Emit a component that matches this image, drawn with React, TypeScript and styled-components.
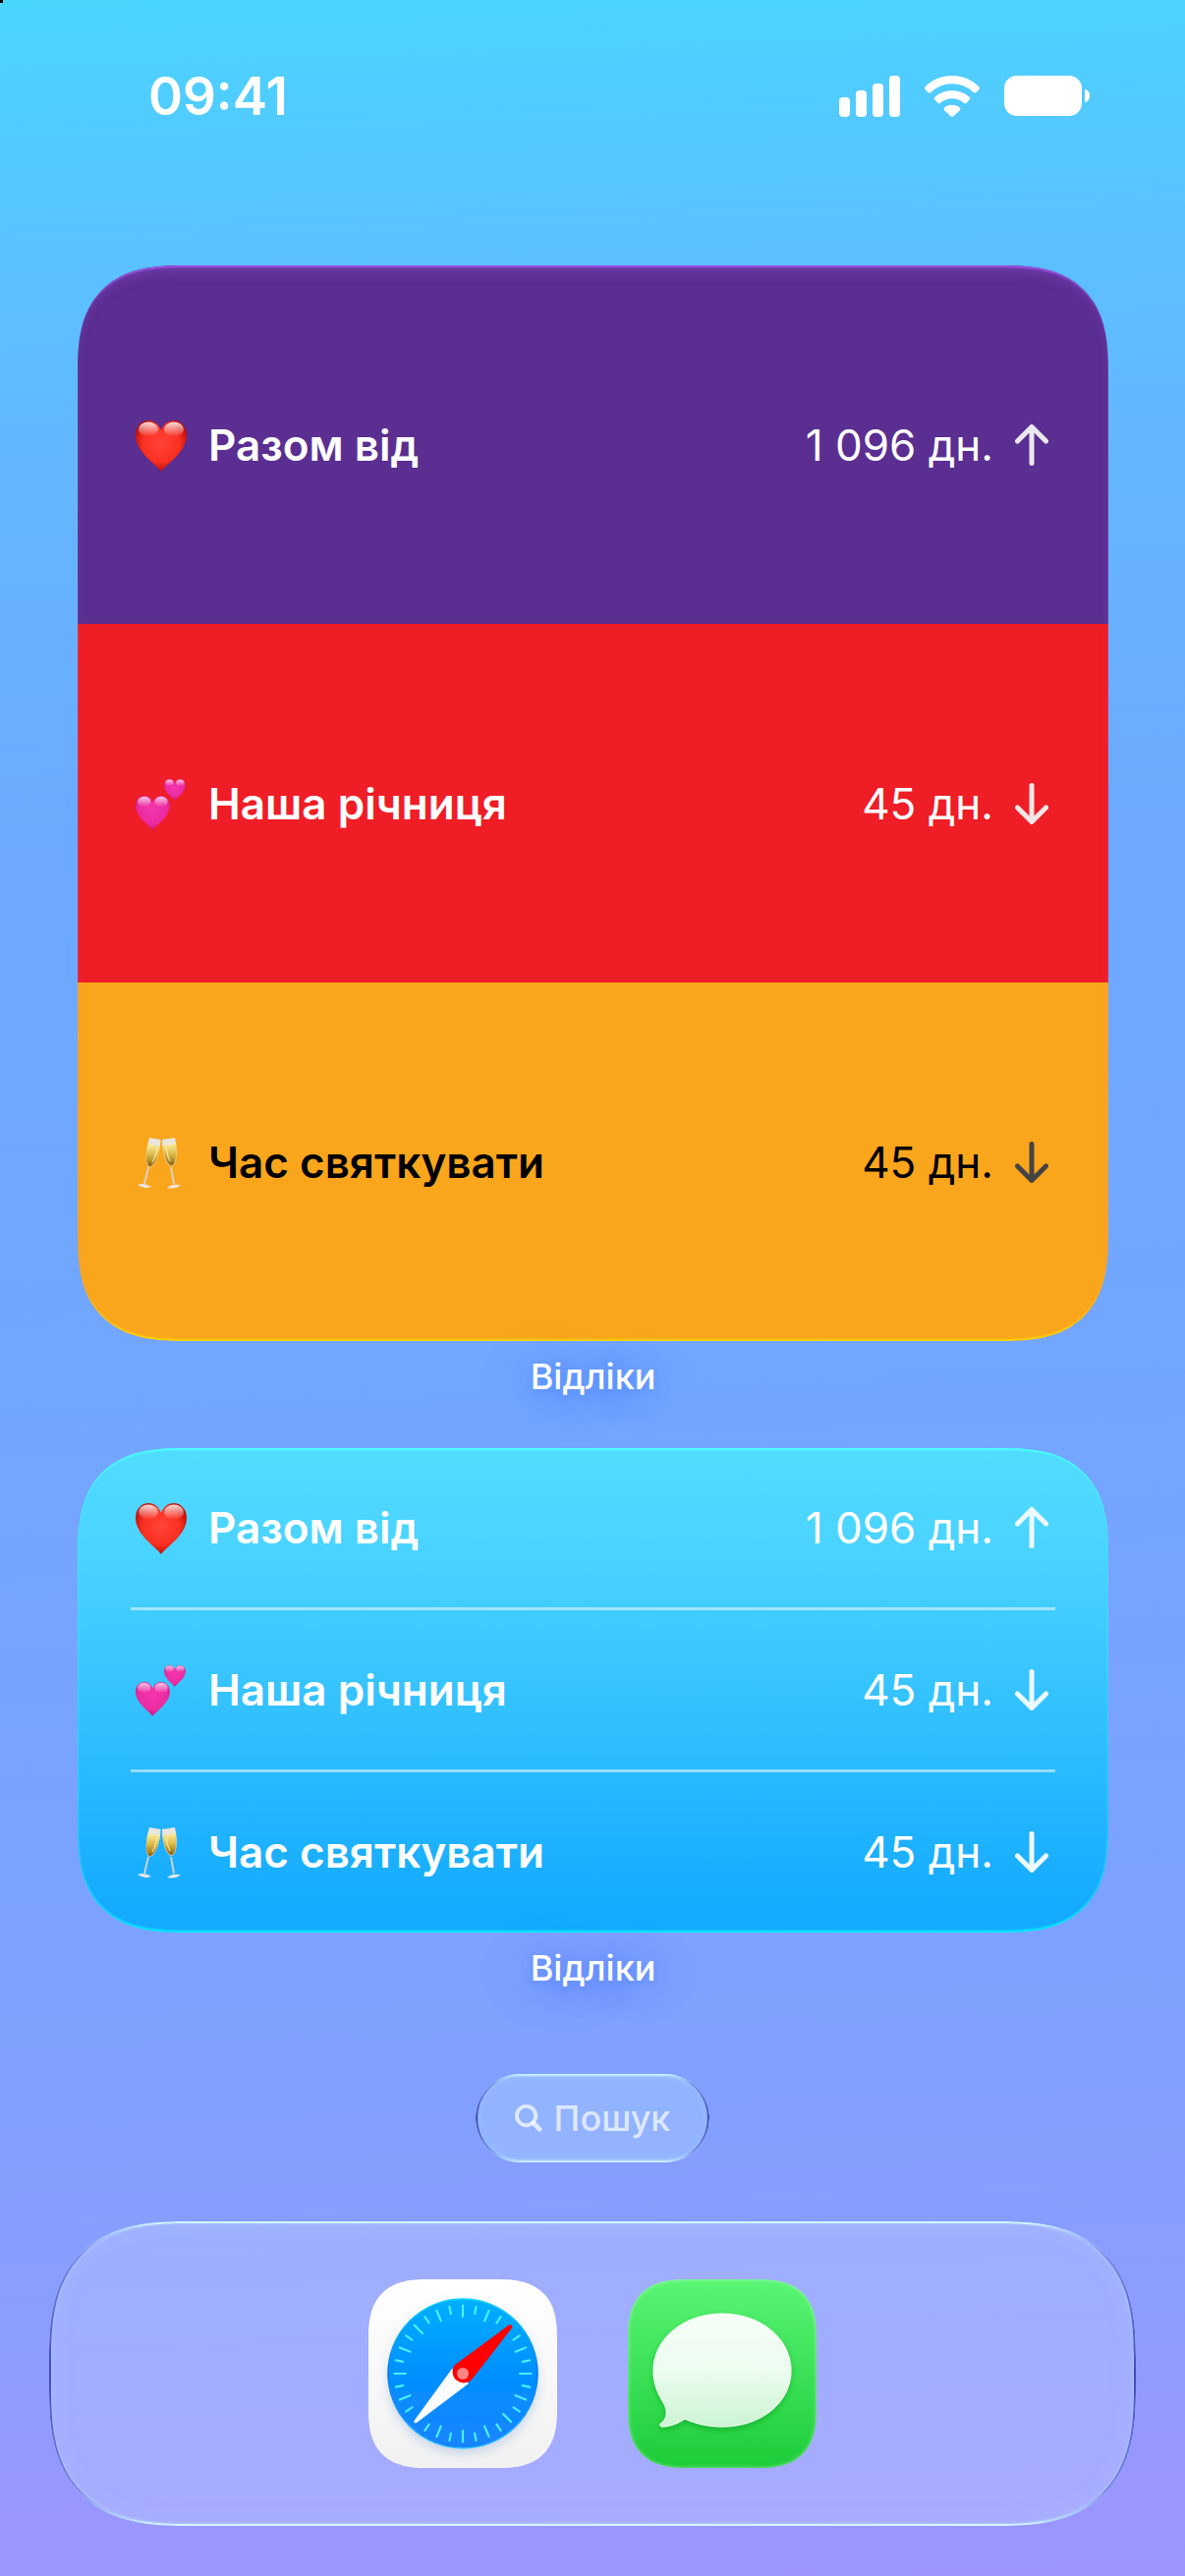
import styled, { createGlobalStyle, css } from "styled-components";

const GlobalStyle = createGlobalStyle`
  * {
    box-sizing: border-box;
  }
  body {
    margin: 0;
    font-family: Inter, "Noto Sans", sans-serif;
    -webkit-font-smoothing: antialiased;
  }
`;

const HomeScreen = styled.div`
  min-height: 100vh;
  display: flex;
  flex-direction: column;
  align-items: stretch;
  color: white;
  background: linear-gradient(black, black) 0 0 / 3px 3px no-repeat,
    linear-gradient(
      178deg,
      #48d6fc 0%,
      #50cdff 4%,
      #5ac2ff 10%,
      #64b6ff 18%,
      #6caaff 32%,
      #72a6ff 52%,
      #78a3ff 66%,
      #80a0ff 80%,
      #8a9dff 88%,
      #9a96ff 97%,
      #9b95fd 100%
    );
`;

const StatusBar = styled.header`
  display: flex;
  align-items: center;
  justify-content: space-between;
  height: 196px;
  padding: 0 96px 0 151px;
`;
const Time = styled.time`
  font-size: 53px;
  line-height: 60px;
  font-weight: 600;
`;
const StatusIcons = styled.div`
  display: flex;
  align-items: center;
  gap: 24px;
`;

const Widgets = styled.main`
  padding: 74px 78px 0 79px;
`;
const Widget = styled.section`
  margin: 0;
`;
const smoothCorners = css<{ $radius: number }>`
  border-radius: ${(props) => props.$radius}px;
  @supports (corner-shape: squircle) {
    border-radius: ${(props) => Math.round(props.$radius * 1.32)}px;
    corner-shape: superellipse(1.4);
  }
`;

const StripeCard = styled.ul<{ $radius: number }>`
  position: relative;
  margin: 0;
  padding: 0;
  list-style: none;
  overflow: hidden;
  ${smoothCorners}

  &::after {
    content: "";
    position: absolute;
    inset: 0;
    border-radius: inherit;
    corner-shape: inherit;
    pointer-events: none;
    box-shadow: inset 0 3px 2px -1px rgba(178, 92, 255, 0.8),
      inset 0 10px 16px -8px rgba(178, 110, 255, 0.4),
      inset 0 -3px 2px -1px rgba(255, 224, 0, 0.9);
  }
`;
const GlassCard = styled.ul<{ $radius: number }>`
  margin: 0;
  padding: 0 54px 1px;
  list-style: none;
  background: linear-gradient(#52dcff, #46d0ff 28%, #2ebdff 60%, #14aaff 95%);
  box-shadow: inset 0 3px 2px -1px #4bffff, inset 0 -3px 2px -1px #00f0ff,
    inset 0 0 3px rgba(75, 255, 255, 0.7);
  ${smoothCorners}
`;

const Row = styled.li`
  display: flex;
  align-items: center;
`;
const StripeRow = styled(Row)<{ $bgcolor: string; $textcolor: string }>`
  height: 365px;
  padding: 0 54px;
  background: ${(props) => props.$bgcolor};
  color: ${(props) => props.$textcolor};
`;
const GlassRow = styled(Row)`
  height: 162px;

  & + & {
    height: 165px;
    border-top: 3px solid rgba(255, 255, 255, 0.5);
  }
`;
const Emoji = styled.svg`
  width: 52px;
  height: 52px;
  margin: 2px 22px 0 5px;
  flex: none;
`;
const Title = styled.span`
  flex: 1;
  font-size: 44px;
  line-height: 56px;
  font-weight: 600;
`;
const Days = styled.span`
  font-size: 44px;
  line-height: 56px;
`;
const Arrow = styled.svg<{ $down: boolean; $color: string }>`
  width: 34px;
  height: 42px;
  margin: 0 7px 0 22px;
  color: ${(props) => props.$color};
  transform: ${(props) => (props.$down ? "rotate(180deg)" : "none")};
`;

const WidgetLabel = styled.h2`
  position: relative;
  margin: 0;
  padding: 12px 0 49px;
  text-align: center;
  font-size: 36px;
  line-height: 48px;
  font-weight: 500;
  text-shadow: 0 3px 6px rgba(60, 120, 255, 0.25), 0 6px 30px rgba(50, 120, 255, 0.4),
    0 4px 70px rgba(50, 120, 255, 0.25);
`;

/* one thin ring: bright on the top and bottom edges, dark on the sides */
const glassRing = css`
  position: relative;

  &::before {
    content: "";
    position: absolute;
    inset: 0;
    padding: 2px;
    border-radius: inherit;
    corner-shape: inherit;
    pointer-events: none;
    background: linear-gradient(
      #d8fbff 0%,
      #b8dcff 2%,
      rgba(84, 100, 210, 0.6) 12%,
      rgba(52, 60, 180, 0.9) 50%,
      rgba(84, 100, 210, 0.6) 88%,
      #b8dcff 98%,
      #d8fbff 100%
    );
    mask: linear-gradient(black, black) content-box exclude, linear-gradient(black, black);
  }
`;
const SearchButton = styled.button`
  display: flex;
  align-items: center;
  align-self: center;
  gap: 12px;
  height: 90px;
  margin-top: 35px;
  padding: 0 40px;
  border: 0;
  border-radius: 45px;
  color: rgba(255, 255, 255, 0.7);
  background: rgba(160, 195, 255, 0.55);
  font-family: inherit;
  font-size: 36px;
  font-weight: 500;
  ${glassRing}
  box-shadow: inset 0 3px 2px rgba(190, 240, 255, 0.5),
    inset 0 -3px 2px rgba(190, 240, 255, 0.5),
    inset 0 0 14px rgba(160, 210, 255, 0.5);
`;
const Dock = styled.nav<{ $radius: number }>`
  display: flex;
  align-items: center;
  justify-content: center;
  gap: 72px;
  height: 310px;
  margin: 60px 50px 51px;
  background: rgba(180, 192, 255, 0.5);
  ${smoothCorners}
  ${glassRing}
  box-shadow: inset 0 0 2px 3px rgba(190, 215, 255, 0.4),
    inset 0 0 24px rgba(190, 210, 255, 0.3);
`;
const AppButton = styled.button<{ $radius: number; $bg: string }>`
  width: 192px;
  height: 192px;
  padding: 0;
  border: 0;
  background: ${(props) => props.$bg};
  ${smoothCorners}
  box-shadow: inset 0 0 4px rgba(255, 255, 255, 0.5);

  & > svg {
    display: block;
  }
`;

type EmojiName = "heart" | "hearts" | "glasses";

interface ICountdown {
  emoji: EmojiName;
  title: string;
  days: string;
  down: boolean;
  color: string;
  text: string;
  arrow: string;
}

const countdowns: ICountdown[] = [
  {
    emoji: "heart",
    title: "Разом від",
    days: "1 096 дн.",
    down: false,
    color: "#5b2e91",
    text: "white",
    arrow: "#ebe8f0",
  },
  {
    emoji: "hearts",
    title: "Наша річниця",
    days: "45 дн.",
    down: true,
    color: "#ef1d25",
    text: "white",
    arrow: "#f4e6e7",
  },
  {
    emoji: "glasses",
    title: "Час святкувати",
    days: "45 дн.",
    down: true,
    color: "#faa61c",
    text: "black",
    arrow: "#444444",
  },
];

const heartPath =
  "M26 52C20 44 0 32 0 15C0 6 6 0 13.500 0C19 0 24 4 26 10C28 4 33 0 38.500 0C46 0 52 6 52 15C52 32 32 44 26 52Z";

function EmojiIcon({ name, id }: { name: EmojiName; id: string }) {
  if (name === "heart") {
    return (
      <Emoji viewBox="0 0 52 52" aria-hidden="true">
        <defs>
          <radialGradient id={`${id}-r`} cx="0.5" cy="0.45" r="0.6">
            <stop offset="0" stopColor="#ff4438" />
            <stop offset="0.6" stopColor="#fa3022" />
            <stop offset="1" stopColor="#ac0400" />
          </radialGradient>
          <linearGradient id={`${id}-s`} x1="0" y1="0" x2="0" y2="1">
            <stop offset="0" stopColor="#fff" stopOpacity="0.85" />
            <stop offset="1" stopColor="#fff" stopOpacity="0" />
          </linearGradient>
        </defs>
        <path d={heartPath} fill={`url(#${id}-r)`} />
        <ellipse cx="13" cy="9" rx="10" ry="7.500" fill={`url(#${id}-s)`} />
        <ellipse cx="39" cy="9" rx="10" ry="7.500" fill={`url(#${id}-s)`} />
      </Emoji>
    );
  }
  if (name === "hearts") {
    return (
      <Emoji viewBox="0 0 52 52" aria-hidden="true">
        <defs>
          <radialGradient id={`${id}-p`} cx="0.5" cy="0.4" r="0.65">
            <stop offset="0" stopColor="#f534ae" />
            <stop offset="0.65" stopColor="#ea2ba0" />
            <stop offset="1" stopColor="#c01078" />
          </radialGradient>
          <linearGradient id={`${id}-s`} x1="0" y1="0" x2="0" y2="1">
            <stop offset="0" stopColor="#fff" stopOpacity="0.75" />
            <stop offset="1" stopColor="#fff" stopOpacity="0" />
          </linearGradient>
        </defs>
        <g transform="translate(0 17) scale(0.67)">
          <path d={heartPath} fill={`url(#${id}-p)`} />
          <ellipse cx="13" cy="9" rx="10" ry="8" fill={`url(#${id}-s)`} />
          <ellipse cx="39" cy="9" rx="10" ry="8" fill={`url(#${id}-s)`} />
        </g>
        <g transform="translate(29 0) scale(0.42)">
          <path d={heartPath} fill={`url(#${id}-p)`} />
          <ellipse cx="13" cy="9" rx="10" ry="8" fill={`url(#${id}-s)`} />
          <ellipse cx="39" cy="9" rx="10" ry="8" fill={`url(#${id}-s)`} />
        </g>
      </Emoji>
    );
  }
  return (
    <Emoji viewBox="0 0 52 52" aria-hidden="true">
      <defs>
        <linearGradient id={`${id}-w`} x1="0" y1="0" x2="0" y2="1">
          <stop offset="0" stopColor="#fdf0a0" />
          <stop offset="0.5" stopColor="#dcb845" />
          <stop offset="1" stopColor="#8a5f0c" />
        </linearGradient>
      </defs>
      <path d="M13 30L9 47" stroke="#d8d5cf" strokeWidth="1.800" />
      <path d="M36 30L39 47" stroke="#d8d5cf" strokeWidth="1.800" />
      <path d="M2 48Q8 45 16 50Q9 53 2 48Z" fill="#e9e6e0" />
      <path d="M32 51Q38 46 46 48.500Q40 53 32 51Z" fill="#e9e6e0" />
      <path d="M14 0L25.500 2C25 16 20 29 14.500 30C9 29 10 14 14 0Z" fill="#e9e6dc" />
      <path
        d="M12.500 6Q18 8 24.800 8.500C24 18 19 29 14.500 29.500C10 28 10.500 16 12.500 6Z"
        fill={`url(#${id}-w)`}
      />
      <path d="M27 2L40 0C43 14 42 28 36.500 29C31 29 27 15 27 2Z" fill="#e9e6dc" />
      <path
        d="M27.500 8Q34 8 41 5.500C42 16 41 28 36.500 28.500C32 28 28 17 27.500 8Z"
        fill={`url(#${id}-w)`}
      />
      <path
        d="M22 10C21 17 19 22 17 25M31 10C32 17 34 22 35 24"
        fill="none"
        stroke="#fff3b0"
        strokeWidth="1.500"
        opacity="0.7"
      />
    </Emoji>
  );
}

function RowContent({ item, id, arrow }: { item: ICountdown; id: string; arrow: string }) {
  return (
    <>
      <EmojiIcon name={item.emoji} id={id} />
      <Title>{item.title}</Title>
      <Days>{item.days}</Days>
      <Arrow $down={item.down} $color={arrow} viewBox="0 0 34 42" aria-hidden="true">
        <path
          d="M17 39.500V3M2.500 17L17 2.500L31.500 17"
          fill="none"
          stroke="currentColor"
          strokeWidth="5"
          strokeLinecap="round"
          strokeLinejoin="round"
        />
      </Arrow>
    </>
  );
}

function SafariIcon() {
  // the needle covers two of the 32 marks
  const ticks = Array.from({ length: 32 }, (_, i) => i).filter((i) => i !== 4 && i !== 20);
  return (
    <svg width="192" height="192" viewBox="0 0 192 192" aria-hidden="true">
      <defs>
        <linearGradient id="safari-face" x1="0" y1="0" x2="0" y2="1">
          <stop offset="0" stopColor="#00b0ff" />
          <stop offset="0.5" stopColor="#0090ff" />
          <stop offset="1" stopColor="#1a84ff" />
        </linearGradient>
        <linearGradient id="safari-rim" x1="0" y1="0" x2="0" y2="1">
          <stop offset="0" stopColor="#00d8ff" />
          <stop offset="0.5" stopColor="#0070e8" />
          <stop offset="1" stopColor="#30c8ff" />
        </linearGradient>
        <filter id="safari-shadow" x="-20%" y="-20%" width="140%" height="140%">
          <feDropShadow dx="0" dy="5" stdDeviation="5" floodColor="#2060c0" floodOpacity="0.2" />
        </filter>
      </defs>
      <circle
        cx="96"
        cy="96"
        r="76"
        fill="url(#safari-face)"
        stroke="url(#safari-rim)"
        strokeWidth="1.500"
        filter="url(#safari-shadow)"
      />
      {ticks.map((i) => (
        <line
          key={i}
          x1="96"
          x2="96"
          y1="26.500"
          y2={i % 2 === 0 ? 38 : 34}
          stroke="#48f0ff"
          strokeWidth="2.200"
          strokeLinecap="round"
          transform={`rotate(${i * 11.25} 96 96)`}
        />
      ))}
      <path d="M85 91L46.500 144Q45.500 147 49 146L102 106Z" fill="#fafcff" />
      <path d="M88 87L143 46.500Q147 45 146 49.500L106 101A11 11 0 1 1 88 87Z" fill="#ff0000" />
      <circle cx="96" cy="96" r="6" fill="#ff8585" />
    </svg>
  );
}

function MessagesIcon() {
  return (
    <svg width="192" height="192" viewBox="0 0 192 192" aria-hidden="true">
      <defs>
        <linearGradient id="bubble" x1="0" y1="0" x2="0" y2="1">
          <stop offset="0" stopColor="#f6fdf7" />
          <stop offset="0.5" stopColor="#ecfcef" />
          <stop offset="1" stopColor="#cdf4d3" />
        </linearGradient>
        <filter id="bubble-shadow" x="-20%" y="-20%" width="140%" height="140%">
          <feDropShadow dx="0" dy="3" stdDeviation="3" floodColor="#008a18" floodOpacity="0.4" />
        </filter>
      </defs>
      <path
        d="M96 35C135 35 166 60 166 93C166 126 135 150 96 150C82 150 69 147 58 142C51 147 42 150 34 150Q32 149 33 147C38 144 40 139 39 133C38 125 26 115 26 93C26 60 57 35 96 35Z"
        fill="url(#bubble)"
        stroke="#f8fff9"
        strokeWidth="1"
        filter="url(#bubble-shadow)"
      />
    </svg>
  );
}

function App() {
  return (
    <HomeScreen>
      <GlobalStyle />
      <StatusBar>
        <Time>09:41</Time>
        <StatusIcons>
          <svg width="62" height="42" viewBox="0 0 62 42" fill="white" aria-hidden="true">
            <rect x="0" y="22" width="11" height="20" rx="4" />
            <rect x="17" y="15" width="11" height="27" rx="4" />
            <rect x="34" y="8" width="11" height="34" rx="4" />
            <rect x="51" y="0" width="11" height="42" rx="4" />
          </svg>
          <svg width="58" height="42" viewBox="0 0 58 43" fill="white" aria-hidden="true">
            <path d="M29 0C40 0 50 4.500 57 11.500Q58.500 13 57 14.500L54 17.500Q52.500 18.500 51 17.300C45 11.500 37 8.500 29 8.500C21 8.500 13 11.500 7 17.300Q5.500 18.500 4 17.500L1 14.500Q-0.500 13 1 11.500C8 4.500 18 0 29 0Z" />
            <path d="M29 15.500C36 15.500 42.500 18 47 22.300Q48.500 23.800 47 25.200L44 28.300Q42.500 29.500 41 28.300C38 25.500 33.500 23.800 29 23.800C24.500 23.800 20 25.500 17 28.300Q15.500 29.500 14 28.300L11 25.200Q9.500 23.800 11 22.300C15.500 18 22 15.500 29 15.500Z" />
            <path d="M29 30.500C32 30.500 34.800 31.500 37 33.300Q38.300 34.500 37 36L30.300 42.500Q29 43.500 27.700 42.500L21 36Q19.700 34.500 21 33.300C23.200 31.500 26 30.500 29 30.500Z" />
          </svg>
          <svg width="88" height="42" viewBox="0 0 88 42" fill="white" aria-hidden="true">
            <rect x="0" y="0" width="79" height="41" rx="13" />
            <path d="M82 13.500C85 14.500 87 17 87 20.500C87 24 85 26.500 82 27.500Z" />
          </svg>
        </StatusIcons>
      </StatusBar>
      <Widgets>
        <Widget>
          <StripeCard $radius={82}>
            {countdowns.map((item) => (
              <StripeRow key={item.title} $bgcolor={item.color} $textcolor={item.text}>
                <RowContent item={item} id={`large-${item.emoji}`} arrow={item.arrow} />
              </StripeRow>
            ))}
          </StripeCard>
          <WidgetLabel>Відліки</WidgetLabel>
        </Widget>
        <Widget>
          <GlassCard $radius={82}>
            {countdowns.map((item) => (
              <GlassRow key={item.title}>
                <RowContent item={item} id={`medium-${item.emoji}`} arrow="#ecf9ff" />
              </GlassRow>
            ))}
          </GlassCard>
          <WidgetLabel>Відліки</WidgetLabel>
        </Widget>
      </Widgets>
      <SearchButton type="button">
        <svg width="28" height="28" viewBox="0 0 29 29" fill="none" stroke="currentColor" aria-hidden="true">
          <circle cx="12" cy="12" r="10" strokeWidth="4" />
          <path d="M19.500 19.500L26 26" strokeWidth="5" strokeLinecap="round" />
        </svg>
        Пошук
      </SearchButton>
      <Dock $radius={106}>
        <AppButton type="button" aria-label="Safari" $radius={46} $bg="linear-gradient(white, #f1f1f1)">
          <SafariIcon />
        </AppButton>
        <AppButton
          type="button"
          aria-label="Повідомлення"
          $radius={46}
          $bg="linear-gradient(#5af575, #1ccc38)"
        >
          <MessagesIcon />
        </AppButton>
      </Dock>
    </HomeScreen>
  );
}

export default App;
